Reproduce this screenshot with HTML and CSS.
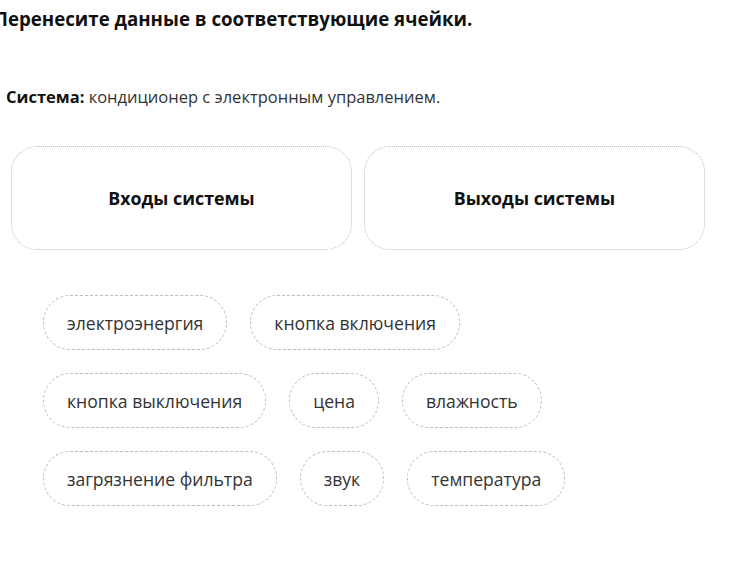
FILE: index.html
```html
<!DOCTYPE html>
<html lang="ru">
<head>
<meta charset="utf-8">
<link rel="stylesheet" href="styles.css">
</head>
<body>
<div class="page">
  <h1 class="title">Перенесите данные в соответствующие ячейки.</h1>
  <p class="system"><b>Система:</b> кондиционер с электронным управлением.</p>
  <div class="targets">
    <div class="target">Входы системы</div>
    <div class="target">Выходы системы</div>
  </div>
  <div class="pool">
    <div class="row">
      <span class="chip">электроэнергия</span>
      <span class="chip">кнопка включения</span>
    </div>
    <div class="row">
      <span class="chip">кнопка выключения</span>
      <span class="chip">цена</span>
      <span class="chip">влажность</span>
    </div>
    <div class="row">
      <span class="chip">загрязнение фильтра</span>
      <span class="chip">звук</span>
      <span class="chip">температура</span>
    </div>
  </div>
</div>
</body>
</html>
```

FILE: styles.css
```css
html, body {
  margin: 0;
  padding: 0;
  background: #fff;
}
body {
  font-family: "Open Sans", "Noto Sans", sans-serif;
  color: #333;
}
.page {
  padding: 0;
}
.title {
  margin: 0;
  padding: 6px 0 0 0;
  margin-left: -6px;
  font-size: 18.7px;
  font-weight: 700;
  line-height: 25px;
  color: #111;
}
.system {
  margin: 0;
  padding: 55px 0 0 6px;
  font-size: 16.5px;
  line-height: 22px;
  color: #333;
}
.system b {
  color: #111;
}
.targets {
  display: flex;
  gap: 12px;
  padding: 38px 0 0 11px;
}
.target {
  width: 341px;
  height: 104px;
  box-sizing: border-box;
  border: 1.5px dotted #bcbcbc;
  border-radius: 26px;
  display: flex;
  align-items: center;
  justify-content: center;
  font-size: 17.8px;
  font-weight: 700;
  color: #111;
}
.pool {
  display: flex;
  flex-direction: column;
  gap: 23px;
  padding: 45px 0 0 43px;
}
.row {
  display: flex;
  gap: 23px;
}
.chip {
  display: flex;
  align-items: center;
  height: 55px;
  box-sizing: border-box;
  padding: 0 23px;
  border: 1.5px dashed #bcbcbc;
  border-radius: 27px;
  font-size: 17.6px;
  color: #333;
}
```
